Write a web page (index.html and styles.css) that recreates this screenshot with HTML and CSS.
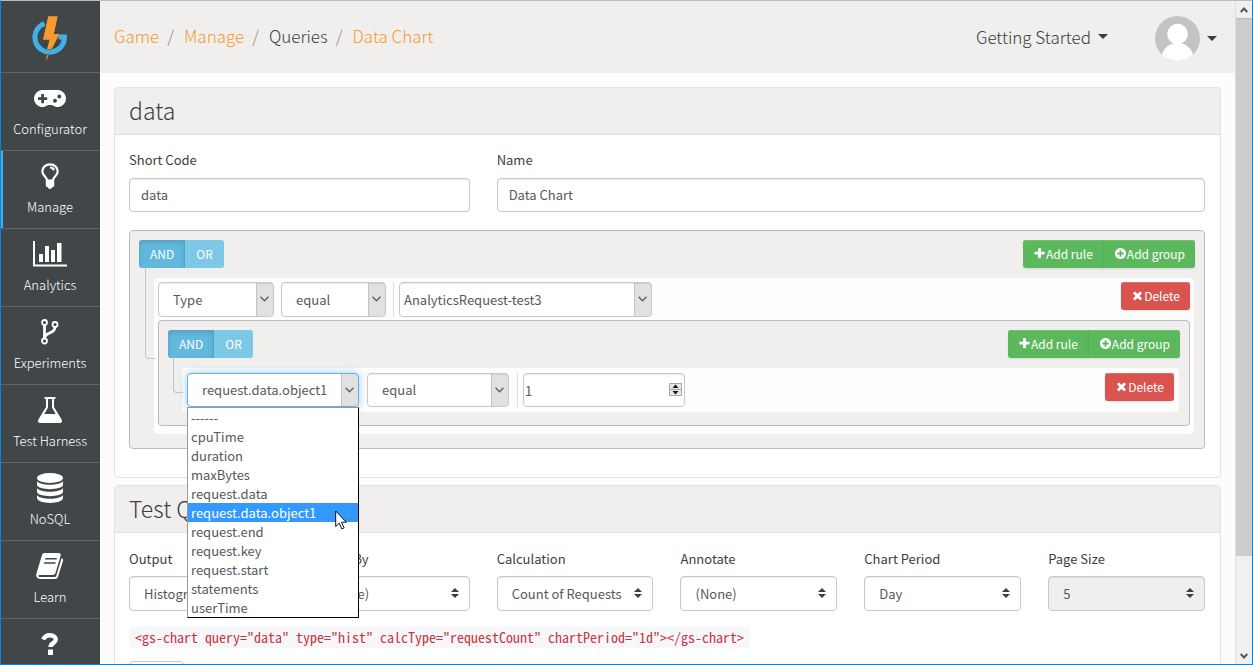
FILE: index.html
```html
<!DOCTYPE html>
<html lang="en">
<head>
<meta charset="utf-8">
<title>Data Chart</title>
<link rel="stylesheet" href="styles.css">
</head>
<body>
<svg class="defs" aria-hidden="true">
  <symbol id="plus" viewBox="0 0 1792 1792"><path d="M1600 736v192q0 40-28 68t-68 28h-416v416q0 40-28 68t-68 28h-192q-40 0-68-28t-28-68v-416h-416q-40 0-68-28t-28-68v-192q0-40 28-68t68-28h416v-416q0-40 28-68t68-28h192q40 0 68 28t28 68v416h416q40 0 68 28t28 68z"/></symbol>
  <symbol id="plus-circle" viewBox="0 0 1792 1792"><path d="M1344 960v-128q0-26-19-45t-45-19h-256v-256q0-26-19-45t-45-19h-128q-26 0-45 19t-19 45v256h-256q-26 0-45 19t-19 45v128q0 26 19 45t45 19h256v256q0 26 19 45t45 19h128q26 0 45-19t19-45v-256h256q26 0 45-19t19-45zm320-64q0 209-103 385.5t-279.5 279.5-385.5 103-385.5-103-279.5-279.5-103-385.5 103-385.5 279.5-279.5 385.5-103 385.5 103 279.5 279.5 103 385.5z"/></symbol>
  <symbol id="times" viewBox="0 0 1792 1792"><path d="M1490 1322q0 40-28 68l-136 136q-28 28-68 28t-68-28l-294-294-294 294q-28 28-68 28t-68-28l-136-136q-28-28-28-68t28-68l294-294-294-294q-28-28-28-68t28-68l136-136q28-28 68-28t68 28l294 294 294-294q28-28 68-28t68 28l136 136q28 28 28 68t-28 68l-294 294 294 294q28 28 28 68z"/></symbol>
  <symbol id="chevron" viewBox="0 0 8 5"><path d="M.5.5 4 4 7.500.5" fill="none" stroke="#606060" stroke-width="1.200"/></symbol>
  <symbol id="updown" viewBox="0 0 8 10"><path d="M4 0l4 4H0zM4 10L0 6h8z"/></symbol>
  <symbol id="caret" viewBox="0 0 10 5"><path d="M0 0h10L5 5z"/></symbol>
</svg>
<div class="window">
  <nav class="sidebar">
    <a class="brand" href="#" aria-label="Home">
      <svg width="38" height="50" viewBox="0 0 38 50"><path d="M17.300 4.500h9.200L22.700 22h5.600L19.500 39 15 49l1-8 2.700-13.500h-6.500z" fill="#f79b2e"/><path d="M13.500 11.500A14.800 14.800 0 1 0 33.500 25.500V25H27" fill="none" stroke="#414649" stroke-width="6.500"/><path d="M13.500 11.500A14.800 14.800 0 1 0 33.500 25.500V25H27.500" fill="none" stroke="#41b0e6" stroke-width="5"/><path d="M17.300 4.500h9.200L22.700 22h5.600L21 36.500q-2 1-5 .5l2.700-9.500h-6.500z" fill="#f79b2e"/></svg>
    </a>
    <a class="item" href="#"><span class="pic"><svg width="32" height="18" viewBox="0 -1 32 18"><path fill-rule="evenodd" d="M8.500 0h15a8.500 8.500 0 1 1-5.500 15h-4A8.500 8.500 0 1 1 8.500 0zM7.200 4v3.200H4v2.800h3.200v3.200H10V10h3.200V7.200H10V4zM21 8.800a2 2 0 1 0 0 4 2 2 0 0 0 0-4zM25.300 4.500a2 2 0 1 0 0 4 2 2 0 0 0 0-4z"/></svg></span>Configurator</a>
    <a class="item active" href="#"><span class="pic"><svg width="18" height="26" viewBox="0 0 18 26"><path d="M6 17C5.500 13.500 1.300 12.500 1.300 8.500 1.300 4.500 4.700 1.300 9 1.300s7.700 3.200 7.700 7.200c0 4-4.200 5-4.700 8.500M9 4.500c2 0 3.600 1 3.800 2.800" fill="none" stroke="#fff" stroke-width="2.200"/><path d="M4.800 16.500h8.400v6c0 1-1 1.700-2 1.800-.5 1-1 1.700-2.200 1.700s-1.700-.7-2.200-1.700c-1-.1-2-.8-2-1.800z"/></svg></span>Manage</a>
    <a class="item" href="#"><span class="pic"><svg width="34" height="26" viewBox="0 0 34 26"><path d="M0 0h2v23.500h32v2H0zM6 13h4v8H6zM12 5h4v16h-4zM18 9h4v12h-4zM24 2h4.500v19H24z"/></svg></span>Analytics</a>
    <a class="item" href="#"><span class="pic"><svg width="18" height="26" viewBox="0 0 18 26"><g fill="none" stroke="#fff"><g stroke-width="1.800"><circle cx="3.500" cy="3.500" r="2.500"/><circle cx="3.500" cy="22" r="2.500"/><circle cx="14" cy="5.500" r="2.500"/></g><path d="M3.500 6v13.500M14 8c0 7-9 5-10 10" stroke-width="2.800"/></g></svg></span>Experiments</a>
    <a class="item" href="#"><span class="pic"><svg width="26" height="26" viewBox="0 0 26 26"><path fill-rule="evenodd" d="M7.500 0h11v2H17v8l7.600 12.500c1.200 2-.2 3.500-2 3.500H3.400c-1.800 0-3.200-1.500-2-3.500L9 10V2H7.500zM11 2v8.600L7.300 17h11.400L15 10.600V2z"/></svg></span>Test Harness</a>
    <a class="item" href="#"><span class="pic"><svg width="26" height="30" viewBox="0 0 26 30"><ellipse cx="13" cy="5" rx="13" ry="5"/><path d="M0 8c3 5 23 5 26 0v4c-1 5.500-25 5.500-26 0zM0 15c3 5 23 5 26 0v4c-1 5.500-25 5.500-26 0zM0 22c3 5 23 5 26 0v3c-1 6.500-25 6.500-26 0z"/></svg></span>NoSQL</a>
    <a class="item" href="#"><span class="pic"><svg width="28" height="26" viewBox="0 0 28 26"><path fill-rule="evenodd" d="M8.500 0h14.200c1.600 0 2.400 1.200 1.900 2.700L19.500 20c-.4 1.300-1.500 2-2.800 2H3.500c-.8 0-1.300.6-1 1.200.3.600 1 .9 1.800.9h14c1 0 1.700-.5 2-1.400L25.600 5c1.300.7 1.700 1.700 1.300 3l-5 16c-.4 1.200-1.500 2-2.800 2h-15C1.500 26-.4 23.500.3 21L6 2C6.400.7 7.300 0 8.500 0zM9.500 5l-.5 1.500h11.500L21 5zM8.300 9.300l-.5 1.500h11.500l.5-1.500z"/></svg></span>Learn</a>
    <a class="item" href="#" aria-label="Help"><span class="pic"><svg width="18" height="22" viewBox="0 0 18 22"><path d="M2.200 6.500C3.500 3.500 5.700 2.200 8.800 2.200c3.600 0 6 1.900 6 4.300 0 3.600-5.300 3.600-5.300 7.500" fill="none" stroke="#fff" stroke-width="4.400"/><path d="M7 16.500h5V22H7z"/></svg></span></a>
  </nav>
  <div class="page">
    <header class="topbar">
      <nav class="crumbs"><a href="#">Game</a><i>/</i><a href="#">Manage</a><i>/</i><span>Queries</span><i>/</i><a href="#">Data Chart</a></nav>
      <button class="menu" type="button">Getting Started <svg width="10" height="5"><use href="#caret"/></svg></button>
      <button class="menu user" type="button" aria-label="Account"><svg width="45" height="45" viewBox="0 0 45 45"><defs><clipPath id="disc"><circle cx="22.500" cy="22.500" r="22.500"/></clipPath></defs><g clip-path="url(#disc)"><path fill="#c3c3c3" d="M0 0h45v45H0z"/><circle cx="22.500" cy="18" r="10.300" fill="#fff"/><path fill="#fff" d="M6 45C6 34 13 27 22.500 27S39 34 39 45z"/></g></svg><svg width="10" height="5"><use href="#caret"/></svg></button>
    </header>
    <main>
      <section class="panel">
        <h2>data</h2>
        <div class="body">
          <div class="fields">
            <label class="field third">Short Code<input class="box" type="text" value="data"></label>
            <label class="field rest">Name<input class="box" type="text" value="Data Chart"></label>
          </div>
          <div class="group">
            <div class="bar">
              <div class="seg"><button class="btn on" type="button">AND</button><button class="btn" type="button">OR</button></div>
              <div class="seg"><button class="btn add" type="button"><svg><use href="#plus"/></svg>Add rule</button><button class="btn add" type="button"><svg><use href="#plus-circle"/></svg>Add group</button></div>
            </div>
            <div class="rules outer">
              <div class="rule">
                <span class="pick type"><select class="box" aria-label="Field"><option>Type</option></select><svg><use href="#chevron"/></svg></span>
                <span class="pick op"><select class="box" aria-label="Operator"><option>equal</option></select><svg><use href="#chevron"/></svg></span>
                <span class="value"><span class="pick long"><select class="box" aria-label="Value"><option>AnalyticsRequest-test3</option></select><svg><use href="#chevron"/></svg></span></span>
                <button class="btn del" type="button"><svg><use href="#times"/></svg>Delete</button>
              </div>
              <div class="group">
                <div class="bar">
                  <div class="seg"><button class="btn on" type="button">AND</button><button class="btn" type="button">OR</button></div>
                  <div class="seg"><button class="btn add" type="button"><svg><use href="#plus"/></svg>Add rule</button><button class="btn add" type="button"><svg><use href="#plus-circle"/></svg>Add group</button></div>
                </div>
                <div class="rules inner">
                  <div class="rule">
                    <span class="pick attr"><select class="box focus" aria-label="Field"><option>request.data.object1</option></select><svg><use href="#chevron"/></svg>
                      <ul class="list" role="listbox">
                        <li role="option">------</li><li role="option">cpuTime</li><li role="option">duration</li><li role="option">maxBytes</li><li role="option">request.data</li><li role="option" aria-selected="true" class="sel">request.data.object1<svg class="pointer" width="12" height="20" viewBox="0 0 12 20"><path d="M.7 1v15.500l3.600-3.400 2.500 5.800 2.300-1-2.500-5.700h4.700z" fill="#fff" stroke="#111"/></svg></li><li role="option">request.end</li><li role="option">request.key</li><li role="option">request.start</li><li role="option">statements</li><li role="option">userTime</li>
                      </ul>
                    </span>
                    <span class="pick op2"><select class="box" aria-label="Operator"><option>equal</option></select><svg><use href="#chevron"/></svg></span>
                    <span class="value"><span class="num"><input class="box" type="text" inputmode="numeric" value="1" aria-label="Value"><svg width="13" height="13" viewBox="0 0 13 13"><path fill="#e6e6e6" stroke="#a8a8a8" d="M.5.500h12v12H.5zM0 6.500h13"/><path d="M6.500 1.500 9.500 5h-6zM6.500 11.500 3.500 8h6z"/></svg></span></span>
                    <button class="btn del" type="button"><svg><use href="#times"/></svg>Delete</button>
                  </div>
                </div>
              </div>
            </div>
          </div>
        </div>
      </section>
      <section class="panel">
        <h2>Test Query</h2>
        <div class="body output">
          <div class="fields">
            <label class="field">Output<span class="combo"><select class="box"><option>Histogram</option></select><svg><use href="#updown"/></svg></span></label>
            <label class="field">Group By<span class="combo"><select class="box"><option>(None)</option></select><svg><use href="#updown"/></svg></span></label>
            <label class="field">Calculation<span class="combo"><select class="box"><option>Count of Requests</option></select><svg><use href="#updown"/></svg></span></label>
            <label class="field">Annotate<span class="combo"><select class="box"><option>(None)</option></select><svg><use href="#updown"/></svg></span></label>
            <label class="field">Chart Period<span class="combo"><select class="box"><option>Day</option></select><svg><use href="#updown"/></svg></span></label>
            <label class="field">Page Size<span class="combo"><select class="box" disabled><option>5</option></select><svg><use href="#updown"/></svg></span></label>
          </div>
          <code>&lt;gs-chart query="data" type="hist" calcType="requestCount" chartPeriod="1d"&gt;&lt;/gs-chart&gt;</code>
          <button class="more" type="button"></button>
        </div>
      </section>
    </main>
  </div>
  <div class="scroll" aria-hidden="true">
    <span class="arrow"><svg width="8" height="6" viewBox="0 0 8 6"><path d="M.7 5 4 1.500 7.300 5" fill="none" stroke="#555" stroke-width="2"/></svg></span>
    <span class="thumb"></span><span class="track"></span>
    <span class="arrow down"><svg width="8" height="6" viewBox="0 0 8 6"><path d="M.7 1 4 4.500 7.300 1" fill="none" stroke="#555" stroke-width="2"/></svg></span>
  </div>
</div>
</body>
</html>
```
FILE: styles.css
```css
* { box-sizing: border-box; }
body { margin: 0; font: 13px/20px "Noto Sans CJK SC", "Noto Sans", sans-serif; color: #3a3e41; background: #fcfcfa; }
button, input, select { font: inherit; color: inherit; margin: 0; }
a { text-decoration: none; color: #f79b2e; }
svg { display: block; flex: none; fill: currentColor; }
.defs { display: none; }

.window { display: flex; height: 100vh; overflow: hidden; border: 1px solid #1a80d2; border-top-color: #bdbcbb; }

.sidebar { flex: none; width: 99px; background: #414649; overflow: hidden; }
.brand { display: flex; align-items: center; justify-content: center; height: 71px; padding-right: 1px; }
.item { display: flex; flex-direction: column; align-items: center; gap: 6px; height: 78px; padding: 10px 1px 0 0; border-top: 1px solid #606568; color: #fff; font-weight: 300; }
.active { box-shadow: inset 2px 0 #41b0e6; }
.pic { display: flex; align-items: center; height: 30px; }

.page { flex: 1; min-width: 0; overflow: hidden; }
.topbar { display: flex; align-items: center; height: 72px; padding: 2px 18px 0 14px; background: #f0efed; font-size: 17px; font-weight: 300; }
.crumbs { flex: 1; display: flex; padding-bottom: 4px; }
.crumbs i { font-style: normal; color: #8a8d90; padding: 0 10px 0 8px; }
.menu { display: flex; align-items: center; gap: 7px; padding: 0 0 3px; border: 0; background: none; }
.user { margin-left: 47px; padding: 0; }

main { display: flex; flex-direction: column; gap: 7px; padding: 14px; }
.panel { border: 1px solid #e2e2e0; border-radius: 4px; background: #fff; }
h2 { margin: 0; padding: 0 14px 2px; border-bottom: 1px solid #e2e2e0; background: #f0efed; font-size: 23px; line-height: 44px; font-weight: 300; }
.body { padding: 15px 15px 28px 14px; }
.fields { display: grid; grid-template-columns: repeat(12, minmax(0, 1fr)); gap: 27px; margin-bottom: 18px; }
.field { grid-column: span 2; display: flex; flex-direction: column; gap: 8px; }
.third { grid-column: span 4; }
.rest { grid-column: span 8; }
.output { padding-top: 16px; }
.output .fields { margin-bottom: 16px; }
.output .field { gap: 7px; }
.box { display: block; width: 100%; height: 34px; padding: 0 11px 2px; border: 1px solid #c8c8c8; border-radius: 4px; background: #fff; color: #55595c; box-shadow: inset 0 1px 1px rgba(0,0,0,.08); appearance: none; outline: 0; }
.box:disabled { background: #f0efed; opacity: 1; }
.combo { position: relative; }
.combo .box { height: 35px; padding: 0 14px; }
.combo svg { position: absolute; right: 11px; top: 12px; width: 8px; height: 10px; pointer-events: none; }

.group { border: 1px solid #bcbcbc; border-radius: 4px; background: #f0efed; padding: 9px; }
.bar { display: flex; justify-content: space-between; }
.seg { display: flex; }
.btn { display: flex; align-items: center; height: 28px; padding: 0 11px 1px; border: 0; background: #7ec8e7; color: #fff; font-size: 12px; }
.seg .btn:first-child { border-radius: 3px 0 0 3px; }
.seg .btn:last-child { border-radius: 0 3px 3px 0; }
.seg .on { padding-right: 10px; background: #62b8dd; border-right: 1px solid #46a9d6; box-shadow: inset 0 3px 5px rgba(0,0,0,.12); }
.btn svg { width: 13px; height: 13px; }
.btn.add, .btn.del { padding-left: 10px; padding-right: 10px; }
.seg .add { background: #5cb85c; box-shadow: inset 0 1px #6fc16d, 0 1px 2px rgba(0,0,0,.1); }
.add + .add { border-left: 1px solid #57b057; }
.del { margin-left: auto; background: #d9534f; border-radius: 3px; box-shadow: inset 0 1px #df706c, 0 1px 2px rgba(0,0,0,.1); }

.rules { position: relative; background: #fdfdfd; border-radius: 4px; }
.rules::before { content: ""; position: absolute; left: -9px; top: -10px; width: 9px; border: 1px solid #c4c4c4; border-width: 0 0 1px 1px; border-radius: 0 0 0 4px; }
.outer { margin: 10px 1px 5px 15px; padding: 4px 4px 8px; }
.outer::before { height: 90px; }
.inner { margin: 10px 1px 4px 14px; padding: 5px; }
.inner::before { height: 34px; }
.rule { display: flex; align-items: flex-start; gap: 8px; }
.outer > .rule { margin-bottom: 3px; gap: 7px; }
.pick { position: relative; flex: none; }
.pick .box { padding: 0 30px 0 14px; background: linear-gradient(#c4c4c4, #c4c4c4) right 16px top / 1px 100% no-repeat, linear-gradient(#e1e1e1, #e1e1e1) right / 16px 100% no-repeat, #fff; }
.outer > .rule .box { height: 35px; }
.pick > svg { position: absolute; right: 5px; top: 14px; width: 9px; height: 6px; pointer-events: none; }
.type { width: 116px; }
.op { width: 105px; }
.value { display: flex; padding-left: 5px; border-left: 1px solid #dcdcdc; }
.long { width: 253px; }
.long .box { padding-left: 4px; }
.attr { width: 172px; }
.op2 { width: 142px; }
.num { position: relative; width: 162px; }
.num .box { padding: 0 1px; }
.num svg { position: absolute; right: 3px; top: 10px; fill: #111; }
.pick .focus { border-color: #66afe9; box-shadow: 0 0 8px rgba(102,175,233,.6); }

.list { position: absolute; z-index: 2; top: 34px; left: 0; right: 0; margin: 0; padding: 0; list-style: none; background: #fff; border: 1px solid #999; border-right-color: #000; border-bottom-color: #000; color: #55595c; line-height: 19px; }
.list li { position: relative; padding-left: 3px; }
.list .sel { background: #3399ff; color: #fff; }
.pointer { position: absolute; right: 11px; top: 7px; z-index: 1; }

code { display: block; width: fit-content; padding: 0 6px; border-radius: 4px; background: #f7f7f9; color: #c7353f; font: 14px/21px "Noto Sans Mono CJK SC", "DejaVu Sans Mono", monospace; white-space: nowrap; }
.more { display: block; width: 55px; height: 34px; margin-top: 13px; border: 1px solid #c8c8c8; border-radius: 4px; background: #fff; }

.scroll { flex: none; display: flex; flex-direction: column; width: 17px; background: #f0f0f0; border-left: 1px solid #dedede; }
.arrow { display: flex; flex: none; align-items: center; justify-content: center; height: 17px; }
.thumb { flex: 538; background: #cdcdcd; border-top: 1px solid #b8b8b8; }
.track { flex: 91; }
```
